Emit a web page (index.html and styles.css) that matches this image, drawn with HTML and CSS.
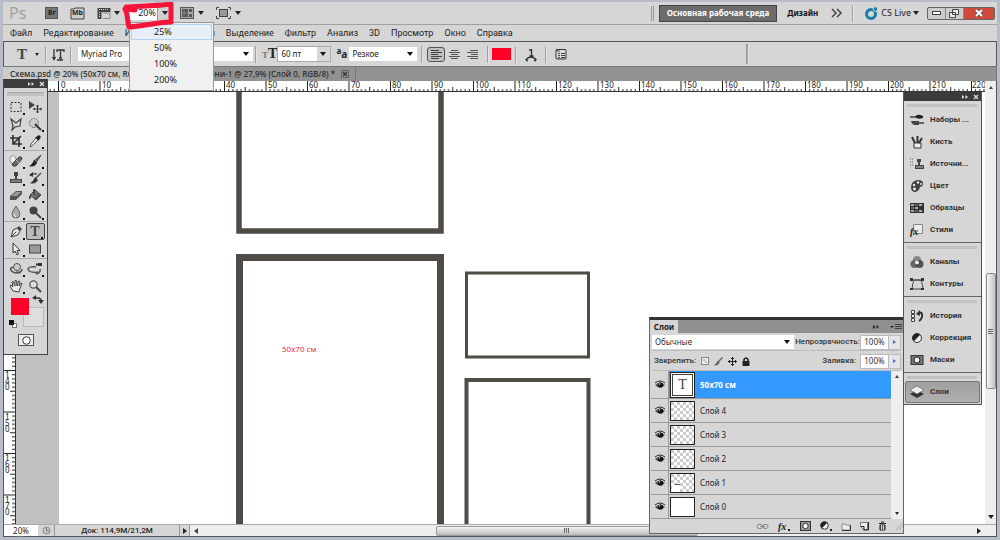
FILE: index.html
```html
<!DOCTYPE html>
<html lang="ru">
<head>
<meta charset="utf-8">
<title>Схема.psd</title>
<link rel="stylesheet" href="styles.css">
</head>
<body>
<svg class="defs" aria-hidden="true">
  <defs>
    <pattern id="checker" width="6" height="6" patternUnits="userSpaceOnUse"><rect width="6" height="6" fill="#fff"/><path d="M0 0h3v3H0zM3 3h3v3H3z" fill="#ccc"/></pattern>
    <pattern id="hticks" x="54" width="41.5" height="11" patternUnits="userSpaceOnUse">
      <path d="M.5 0v11M21.2 6v5M4.6 8v3M8.8 8v3M12.9 8v3M17 8v3M25.4 8v3M29.5 8v3M33.7 8v3M37.8 8v3" stroke="#222" fill="none"/>
    </pattern>
    <pattern id="vticks" y="29" x="0" width="11" height="41.5" patternUnits="userSpaceOnUse">
      <path d="M0 .5h11M6 21.2h5M8 4.6h3M8 8.8h3M8 12.9h3M8 17h3M8 25.4h3M8 29.5h3M8 33.7h3M8 37.8h3" stroke="#222" fill="none"/>
    </pattern>
    <linearGradient id="dark" x1="0" y1="0" x2="1" y2="1"><stop offset="0" stop-color="#aaa"/><stop offset="1" stop-color="#333"/></linearGradient>
    <symbol id="eye" viewBox="0 0 12 12"><path d="M1 6Q6 1 11 6Q6 11 1 6z" fill="#555"/><circle cx="6.500" cy="6" r="2.600" fill="#111"/><path d="M1 4Q6 0 11 4" stroke="#222" fill="none"/><circle cx="5.500" cy="5" r=".8" fill="#ddd"/></symbol>
    <symbol id="close" viewBox="0 0 8 8"><path d="M2 2l4 4M6 2L2 6" stroke="currentColor" stroke-width="1.400"/></symbol>
    <symbol id="chevs" viewBox="0 0 8 8"><path d="M1 2l2.500 2L1 6zM4.500 2L7 4 4.500 6z" fill="currentColor"/></symbol>
  </defs>
</svg>
<div class="app">
  <header class="appbar">
    <span class="logo">Ps</span>
    <button class="ico bridge" aria-label="Bridge"><svg width="13" height="12"><rect x=".5" y=".5" width="12" height="11" fill="#777" stroke="#555"/></svg><span class="mark">Br</span></button>
    <button class="ico mini" aria-label="Mini Bridge"><svg width="15" height="13"><path d="M1 2h3l1-1h9v11H1z" fill="#ccc" stroke="#444"/></svg><span class="mark">Mb</span></button>
    <button class="ico film" aria-label="Вид"><svg width="15" height="13"><path d="M.5 1h13v4h-9v7h-4z" fill="#444"/><path d="M2 2.500h10" stroke="#ddd" stroke-dasharray="1 1"/><path d="M2.500 5v6" stroke="#ddd" stroke-dasharray="1 1"/><path d="M6 6h7v5.500H6" fill="none" stroke="#888"/></svg><i class="tri"></i></button>
    <div class="zoom">
      <input type="text" value="20%" aria-label="Масштаб"><button class="drop" aria-label="Список масштабов"><i class="tri"></i></button>
      <ul class="zoommenu">
        <li class="on"><button>25%</button></li><li><button>50%</button></li><li><button>100%</button></li><li><button>200%</button></li>
      </ul>
      <svg class="scribble" width="56" height="32"><path d="M3 5C14 4 35 4 48 2L48 20C36 20 22 24 6 25C4 18 5 12 2 7L12 8" fill="none" stroke="#f4143a" stroke-width="5" stroke-linecap="round" stroke-linejoin="round"/></svg>
    </div>
    <button class="ico arrange" aria-label="Упорядочить"><svg width="14" height="12"><rect x=".5" y=".5" width="13" height="11" fill="#aaa" stroke="#555"/><path d="M2 2h6v8H2zM9 2h3v3H9zM9 7h3v3H9z" fill="#555"/><path d="M4 3v6M2 6h6" stroke="#888"/></svg><i class="tri"></i></button>
    <button class="ico" aria-label="Режим экрана"><svg width="15" height="12"><rect x="3.500" y="2.500" width="8" height="7" fill="#999" stroke="#444"/><path d="M.5 3V.5H3M12 .5h2.500V3M.5 9v2.500H3M12 11.500h2.500V9" stroke="#444" fill="none"/></svg><i class="tri"></i></button>
    <div class="right">
      <i class="grip2"></i>
      <button class="ws on">Основная рабочая среда</button>
      <button class="ws">Дизайн</button>
      <button class="more" aria-label="Ещё"><svg width="11" height="8"><path d="M1 0l4 4-4 4M6 0l4 4-4 4" fill="none" stroke="#444" stroke-width="1.500"/></svg></button>
      <i class="sep"></i>
      <button class="cslive"><svg width="15" height="15"><circle cx="7" cy="8" r="4.500" fill="none" stroke="#1b7da6" stroke-width="3"/><circle cx="11.500" cy="3" r="2.300" fill="#1b7da6" stroke="#d6d6d6"/></svg>CS Live<i class="tri"></i></button>
      <div class="winbtns">
        <button aria-label="Свернуть"><svg width="10" height="6"><rect x=".5" y="1.500" width="8" height="3" fill="#fff" stroke="#444"/></svg></button>
        <button aria-label="Восстановить"><svg width="11" height="9"><path d="M3.500.5h6v5h-6zM.5 3.500h6v5h-6z" fill="#eee" stroke="#444"/></svg></button>
        <button class="x" aria-label="Закрыть"><svg width="9" height="8"><path d="M1 1l6 6M7 1L1 7" stroke="#555" stroke-width="3.500"/><path d="M1 1l6 6M7 1L1 7" stroke="#fff" stroke-width="2"/></svg></button>
      </div>
    </div>
  </header>
  <nav class="menubar">
    <button>Файл</button><button>Редактирование</button><button>Изображение</button><button>Слои</button><button>Выделение</button><button>Фильтр</button><button>Анализ</button><button>3D</button><button>Просмотр</button><button>Окно</button><button>Справка</button>
  </nav>
  <div class="options">
    <button class="opt tool" aria-label="Текст"><span class="serif">T</span><i class="tri small"></i></button>
    <i class="sep"></i>
    <button class="opt orient" aria-label="Ориентация"><svg width="12" height="13"><path d="M2 1v10M.5 9L2 11.500 3.500 9M5 4V2h7v2M8.500 2v8M7 10h3M5 12h6" fill="none" stroke="#333" stroke-width="1.300"/></svg></button>
    <i class="sep"></i>
    <label class="sel family"><select aria-label="Гарнитура"><option>Myriad Pro</option></select></label>
    <i class="sep"></i>
    <span class="ticon" aria-hidden="true"><small>T</small>T</span>
    <label class="sel size boxed"><select aria-label="Кегль"><option>60 пт</option></select></label>
    <span class="aa" aria-hidden="true"><sup>a</sup>a</span>
    <label class="sel smooth"><select aria-label="Сглаживание"><option>Резкое</option></select></label>
    <i class="sep"></i>
    <div class="aligns">
      <button class="on" aria-label="По левому краю"><svg width="11" height="11"><path d="M0 1.500h8M0 3.500h11M0 5.500h7M0 7.500h11M0 9.500h8" stroke="#444"/></svg></button>
      <button aria-label="По центру"><svg width="11" height="11"><path d="M2 1.500h7M0 3.500h11M2 5.500h7M0 7.500h11M2 9.500h7" stroke="#555"/></svg></button>
      <button aria-label="По правому краю"><svg width="11" height="11"><path d="M3 1.500h8M0 3.500h11M4 5.500h7M0 7.500h11M3 9.500h8" stroke="#555"/></svg></button>
    </div>
    <i class="sep"></i>
    <button class="color" aria-label="Цвет текста"></button>
    <i class="sep"></i>
    <button class="opt warp" aria-label="Деформация"><svg width="12" height="13"><path d="M4 2h3M6.500 1v7M4.500 8h4M.5 12Q6 6 11.500 12M1 12.500h2M9 12.500h2" fill="none" stroke="#333" stroke-width="1.300"/></svg></button>
    <i class="sep"></i>
    <button class="opt panel" aria-label="Панель символов"><svg width="12" height="12"><rect x="1" y="1.500" width="10" height="9.500" rx="1" fill="#ddd" stroke="#333"/><path d="M2 1v2h3M3 5.500h2M6 5.500h4M3 7.500h2M6 7.500h4M3 9.500h2M6 9.500h4" stroke="#444" fill="none"/></svg></button>
    <i class="sep last"></i>
  </div>
  <div class="tabs">
    <button class="tab on">Схема.psd @ 20% (50x70 см, RGB/8) *<svg class="tx" width="8" height="8"><rect x=".5" y=".5" width="7" height="7" fill="none" stroke="#666"/><use href="#close"/></svg></button>
    <button class="tab second">Без имени-1 @ 27,9% (Слой 0, RGB/8) *<svg class="tx" width="8" height="8"><rect x=".5" y=".5" width="7" height="7" fill="none" stroke="#666"/><use href="#close"/></svg></button>
  </div>
  <main class="doc">
    <div class="hruler"><svg width="100%" height="11"><rect width="100%" height="11" fill="url(#hticks)"/>
      <g class="rl"><text x="57" y="7">0</text><text x="98" y="7">10</text><text x="140" y="7">20</text><text x="181" y="7">30</text><text x="222" y="7">40</text><text x="264" y="7">50</text><text x="305" y="7">60</text><text x="347" y="7">70</text><text x="388" y="7">80</text><text x="430" y="7">90</text><text x="471" y="7">100</text><text x="513" y="7">110</text><text x="554" y="7">120</text><text x="596" y="7">130</text><text x="637" y="7">140</text><text x="679" y="7">150</text><text x="720" y="7">160</text><text x="762" y="7">170</text><text x="803" y="7">180</text><text x="845" y="7">190</text><text x="886" y="7">200</text><text x="928" y="7">210</text><text x="968" y="7">220</text></g></svg></div>
    <div class="vruler"><svg width="11" height="100%"><rect width="11" height="100%" fill="url(#vticks)"/>
      <g class="rl"><text x="1" y="286">1</text><text x="1" y="292">4</text><text x="1" y="298">0</text><text x="1" y="328">1</text><text x="1" y="334">5</text><text x="1" y="340">0</text><text x="1" y="369">1</text><text x="1" y="375">6</text><text x="1" y="381">0</text><text x="1" y="411">1</text><text x="1" y="417">7</text><text x="1" y="423">0</text></g></svg></div>
    <div class="canvas">
      <svg class="art" width="100%" height="100%">
        <g fill="none" stroke="#4f4b45">
          <rect x="180" y="-40" width="202" height="179" stroke-width="5.500"/>
          <rect x="180.500" y="165.500" width="201" height="400" stroke-width="7"/>
          <rect x="407.500" y="181" width="122" height="84" stroke-width="3"/>
          <rect x="407.500" y="288" width="122" height="300" stroke-width="4"/>
        </g>
        <text x="223" y="260" class="arttext">50x70 см</text>
      </svg>
    </div>
    <div class="vscroll"><i class="tri up"></i><div class="thumb"></div><i class="tri"></i></div>
    <footer class="status">
      <input type="text" value="20%" aria-label="Масштаб документа"><span class="clock"><svg width="9" height="9"><circle cx="4.500" cy="4.500" r="3.500" fill="#ccc" stroke="#888"/><path d="M4.500 2v3H7" stroke="#777" fill="none"/></svg></span>
      <span class="size">Док: 114,9M/21,2M</span>
      <button class="play" aria-label="Сведения"><i class="tri rt"></i></button>
      <div class="hscroll"><i class="tri lf"></i><div class="thumb"></div><i class="tri rt"></i></div>
    </footer>
  </main>
  <svg class="orb" width="22" height="4" aria-hidden="true"><path d="M0 4Q11-3 22 4z" fill="#9fc3dc" stroke="#4c7696"/></svg>

  <aside class="tools" aria-label="Инструменты">
    <div class="head"><svg width="8" height="8"><use href="#chevs"/></svg><svg width="8" height="8"><use href="#close"/></svg></div>
    <i class="grip"></i>
    <div class="tg">
      <button class="m" aria-label="Область"><svg viewBox="0 0 14 14"><rect x="2" y="2.500" width="10" height="9" fill="none" stroke="#333" stroke-dasharray="2 1.500"/></svg></button>
      <button aria-label="Перемещение"><svg viewBox="0 0 14 14"><path d="M1 1v8l6-4z" fill="#444"/><path d="M9.500 5v8M5.500 9h8M8.500 6.500l1-1.500 1 1.500M8.500 11.500l1 1.500 1-1.500M7 8L5.500 9 7 10M12 8l1.500 1L12 10" stroke="#333" fill="none"/></svg></button>
      <button class="m" aria-label="Лассо"><svg viewBox="0 0 14 14"><path d="M2 2l5 4 5-4-1 7-5 1-3 3 1-4z" fill="none" stroke="#444" stroke-width="1.200"/></svg></button>
      <button class="m" aria-label="Быстрое выделение"><svg viewBox="0 0 14 14"><circle cx="6" cy="6" r="4.500" fill="#ccc" stroke="#555" stroke-dasharray="1.500 1"/><path d="M7 7l6 6" stroke="#333" stroke-width="2"/></svg></button>
      <button class="m" aria-label="Рамка"><svg viewBox="0 0 14 14"><path d="M4 1v9h9M1 4h9v9M4 10l8-8" fill="none" stroke="#333" stroke-width="1.700"/></svg></button>
      <button class="m" aria-label="Пипетка"><svg viewBox="0 0 14 14"><path d="M8 4l2 2-6 6-2 1 1-3z" fill="#eee" stroke="#555"/><path d="M8 3l3-2 2 2-2 3 0 1-4-4z" fill="#222"/></svg></button>
    </div>
    <div class="tg">
      <button class="m" aria-label="Восстанавливающая кисть"><svg viewBox="0 0 14 14"><ellipse cx="4" cy="5.500" rx="3" ry="4" fill="#eee" stroke="#999"/><path d="M3 10l7-7q3-1 3 2L7 12q-4 1-4-2z" fill="#666" stroke="#444"/><path d="M7 6l3 3" stroke="#bbb"/></svg></button>
      <button class="m" aria-label="Кисть"><svg viewBox="0 0 14 14"><path d="M13 1L6 7l2 2z" fill="#777" stroke="#444"/><path d="M6 6l3 3q-3 5-8 3 3-1 5-6z" fill="#222"/></svg></button>
      <button class="m" aria-label="Штамп"><svg viewBox="0 0 14 14"><path d="M5 1h4v4H8v3h5v4H1V8h5V5H5z" fill="#444"/><path d="M2 10h10" stroke="#bbb"/></svg></button>
      <button class="m" aria-label="Архивная кисть"><svg viewBox="0 0 14 14"><path d="M13 2L7 8M3 5q0-3 6-2" fill="none" stroke="#555" stroke-width="1.600"/><path d="M1 4l4-3v5zM7 6l3 3q-3 5-8 3 3-1 5-6z" fill="#333"/></svg></button>
      <button class="m" aria-label="Ластик"><svg viewBox="0 0 14 14"><path d="M1 8l6-5h6v3l-6 6H1z" fill="#555"/><path d="M2 8l5-4h5L8 8z" fill="#999"/></svg></button>
      <button class="m" aria-label="Заливка"><svg viewBox="0 0 14 14"><path d="M2 7l5-5 6 5-5 5z" fill="url(#dark)" stroke="#444"/><path d="M6 7V1M3 7q-2 2-1 4" stroke="#333" stroke-width="1.500" fill="none"/></svg></button>
      <button class="m" aria-label="Размытие"><svg viewBox="0 0 14 14"><path d="M7 1q4 6 4 8a4 4 0 0 1-8 0q0-2 4-8z" fill="#aaa" stroke="#666"/><path d="M5 9q0 2 2 3" stroke="#fff" fill="none"/></svg></button>
      <button class="m" aria-label="Осветлитель"><svg viewBox="0 0 14 14"><circle cx="5.500" cy="5.500" r="4" fill="#444"/><path d="M8 8l5 5" stroke="#444" stroke-width="1.800"/></svg></button>
    </div>
    <div class="tg">
      <button class="m" aria-label="Перо"><svg viewBox="0 0 14 14"><path d="M2 12l2-7 4-2 3 3-2 4z" fill="#ddd" stroke="#444"/><path d="M8 3l2-2 3 3-2 2z" fill="#444"/><path d="M2 12l5-5" stroke="#444"/></svg></button>
      <button class="m on" aria-label="Текст"><span class="serif">T</span></button>
      <button class="m" aria-label="Стрелка"><svg viewBox="0 0 14 14"><path d="M4 1v10l2-2 2 4 1.500-1L8 8.500h3z" fill="#eee" stroke="#333"/></svg></button>
      <button class="m" aria-label="Прямоугольник"><svg viewBox="0 0 14 14"><rect x="1.500" y="3" width="11" height="8" fill="#999" stroke="#444"/></svg></button>
    </div>
    <div class="tg">
      <button class="m" aria-label="3D-объект"><svg viewBox="0 0 14 14"><circle cx="8" cy="5" r="3.500" fill="#ccc" stroke="#555"/><path d="M4 5q-5 2 0 5 4 2 8 0M13 7q0 4-6 3" fill="none" stroke="#555" stroke-width="1.600"/></svg></button>
      <button class="m" aria-label="3D-камера"><svg viewBox="0 0 14 14"><path d="M8 5Q0 4 0 7.500q2 4 12 2.500M12 7q1 4-4 5" fill="none" stroke="#555" stroke-width="1.500"/><path d="M8 1l2 1V1h4v3h-4V3L8 4z" fill="#333"/></svg></button>
      <button class="m" aria-label="Рука"><svg viewBox="0 0 14 14"><path d="M4 12L1 7l1-1 2 2-1-5 1-.500L6 7V1.500h1.500L8 7l1.500-5h1L10 7l2-3 1 .500-2 5-1 3.500z" fill="#eee" stroke="#444"/></svg></button>
      <button aria-label="Лупа"><svg viewBox="0 0 14 14"><circle cx="5.500" cy="5.500" r="3.700" fill="#ddd" stroke="#555" stroke-width="1.300"/><path d="M8 8l5 5" stroke="#444" stroke-width="2"/></svg></button>
    </div>
    <div class="swatches">
      <svg width="34" height="34"><rect x="14.500" y="9.500" width="20" height="19" fill="#dedede" stroke="#bbb"/><path d="M2 0h18v17H2z" fill="#ff0026"/><path d="M26 0h3q3 0 3 3" fill="none" stroke="#333" stroke-width="1.500"/><path d="M23 0l4-3v5zM29 2h6l-3 4z" fill="#333"/><rect x="3.500" y="25.500" width="4" height="4" fill="#fff" stroke="#777"/><path d="M0 22h5v5H0z" fill="#111"/></svg>
    </div>
    <button class="qm" aria-label="Быстрая маска"><svg width="9" height="9"><circle cx="4.500" cy="4.500" r="3.800" fill="#fff" stroke="#333"/></svg></button>
  </aside>

  <aside class="dock" aria-label="Панели">
    <div class="head"><svg width="8" height="8"><use href="#chevs"/></svg><svg width="8" height="8"><use href="#close"/></svg></div>
    <div class="group">
      <button><svg viewBox="0 0 14 14"><path d="M0 4h6M8 10h6" stroke="#666" stroke-width="2"/><path d="M5 4q2-4 8-1v2q-5 2-8-1z" fill="#222"/><path d="M1 8h8v4H5q-3 0-4-4z" fill="#444"/></svg>Наборы ...</button>
      <button><svg viewBox="0 0 14 14"><path d="M4 8h7v5H4z" fill="#eee" stroke="#333"/><path d="M5 8L2 2M7.500 8V1M9 8l3-5" stroke="#333" stroke-width="2"/></svg>Кисть</button>
      <button><svg viewBox="0 0 14 14"><path d="M7 2h4v3h-1v3h4v4H5V8h3V5H7z" fill="#444"/><path d="M0 2h4M0 5h4M0 8h3" stroke="#666" stroke-dasharray="1 1"/><path d="M6 10h7" stroke="#bbb"/></svg>Источни...</button>
      <button><svg viewBox="0 0 14 14"><path d="M1 8Q1 2 8 1q6 0 5 5-1 2-3 2-1 5-6 5-3-1-3-5z" fill="#444"/><g fill="#eee"><circle cx="4" cy="6" r="1.200"/><circle cx="8" cy="3.500" r="1.200"/><circle cx="11" cy="5" r="1"/><circle cx="4.500" cy="10" r="1.400"/></g></svg>Цвет</button>
      <button><svg viewBox="0 0 14 14"><path d="M0 2h14v10H0z" fill="#333"/><path d="M1 3h3v2H1zM1 9h3v2H1zM5 6h3v2H5zM9 3h3v2H9zM9 9h3v2H9z" fill="#aaa"/><path d="M5 3h3v2H5zM1 6h3v2H1zM5 9h3v2H5z" fill="#666"/></svg>Образцы</button>
      <button><svg viewBox="0 0 14 14"><path d="M3.500 1.500h9v9h-9z" fill="#eee" stroke="#888"/><text x="0" y="12" class="fx">fx</text></svg>Стили</button>
    </div>
    <div class="group">
      <button><svg viewBox="0 0 14 14"><circle cx="7" cy="5" r="4" fill="#888"/><circle cx="4.500" cy="9" r="4" fill="#666"/><circle cx="9.500" cy="9" r="4" fill="#333" opacity=".8"/><circle cx="7" cy="7.500" r="2" fill="#eee"/></svg>Каналы</button>
      <button><svg viewBox="0 0 14 14"><path d="M2 12Q3 3 5 3h5q2 0 3 9zM1 3h12" fill="none" stroke="#444"/><path d="M0 1h3v3H0zM11 1h3v3h-3zM0 11h3v2H0zM11 11h3v2h-3z" fill="#333"/></svg>Контуры</button>
    </div>
    <div class="group">
      <button><svg viewBox="0 0 14 14"><path d="M1.500 1.500h3v3h-3zM1.500 5.500h3v3h-3zM1.500 9.500h3v3h-3z" fill="#eee" stroke="#444"/><path d="M8 4q5-2 4 4-1 3-3 4" fill="none" stroke="#333" stroke-width="2"/><path d="M6 5l4-4v6z" fill="#333"/></svg>История</button>
      <button><svg viewBox="0 0 14 14"><circle cx="7" cy="7" r="4.500" fill="#eee" stroke="#333"/><path d="M3.800 10.200a4.500 4.500 0 0 1 6.400-6.400z" fill="#222"/></svg>Коррекция</button>
      <button><svg viewBox="0 0 14 14"><rect x="1" y="2.500" width="12" height="9" fill="#777" stroke="#333"/><circle cx="7" cy="7" r="3" fill="#eee" stroke="#222"/></svg>Маски</button>
    </div>
    <div class="group">
      <button class="on"><svg viewBox="0 0 14 14"><path d="M0 9l7-4 7 4-7 4z" fill="#333"/><path d="M0 5l7-4 7 4-7 4z" fill="#eee" stroke="#666" stroke-width=".7"/></svg>Слои</button>
    </div>
  </aside>

  <section class="layers" aria-label="Слои">
    <div class="ltabs"><button class="ltab">Слои</button><span class="lt-r"><svg width="8" height="8"><use href="#chevs"/></svg><svg width="12" height="8"><path d="M0 3h4L2 5z" fill="#222"/><path d="M5 1.500h7M5 3.500h7M5 5.500h7" stroke="#444"/></svg></span></div>
    <div class="lrow">
      <label class="sel mode"><select aria-label="Режим наложения"><option>Обычные</option></select></label>
      <label for="op">Непрозрачность:</label><span class="num"><input id="op" type="text" value="100%"><button aria-label="Ползунок непрозрачности"><i class="tri rt"></i></button></span>
    </div>
    <div class="lrow lock">
      <span>Закрепить:</span>
      <button aria-label="Прозрачность"><svg width="8" height="8"><rect x=".5" y=".5" width="7" height="7" fill="#eee" stroke="#888"/><path d="M2 2h2v2H2zM4 4h2v2H4z" fill="#bbb"/></svg></button>
      <button aria-label="Пиксели"><svg width="9" height="9"><path d="M8.500.5L4 5" stroke="#666" stroke-width="1.500"/><path d="M4 4l1.500 1.500Q4 9 0 8.500 2 7 4 4z" fill="#555"/></svg></button>
      <button aria-label="Положение"><svg width="9" height="9"><path d="M4.500 0v9M0 4.500h9M3 2L4.500.5 6 2M3 7l1.500 1.500L6 7M2 3L.5 4.500 2 6M7 3l1.500 1.500L7 6" fill="none" stroke="#222"/></svg></button>
      <button aria-label="Всё"><svg width="8" height="9"><path d="M2 4V2.500Q4-.5 6 2.500V4" fill="none" stroke="#222" stroke-width="1.500"/><path d="M.5 4h7v5h-7z" fill="#222"/></svg></button>
      <label class="push" for="fl">Заливка:</label><span class="num"><input id="fl" type="text" value="100%"><button aria-label="Ползунок заливки"><i class="tri rt"></i></button></span>
    </div>
    <div class="lbody">
      <ul class="llist">
        <li class="on"><span class="eye"><svg width="12" height="12"><use href="#eye"/></svg></span><span class="th t"><span class="serif">T</span></span><span>50x70 см</span></li>
        <li><span class="eye"><svg width="12" height="12"><use href="#eye"/></svg></span><span class="th"><svg><rect width="100%" height="100%" fill="url(#checker)"/></svg></span><span>Слой 4</span></li>
        <li><span class="eye"><svg width="12" height="12"><use href="#eye"/></svg></span><span class="th"><svg><rect width="100%" height="100%" fill="url(#checker)"/></svg></span><span>Слой 3</span></li>
        <li><span class="eye"><svg width="12" height="12"><use href="#eye"/></svg></span><span class="th"><svg><rect width="100%" height="100%" fill="url(#checker)"/></svg></span><span>Слой 2</span></li>
        <li><span class="eye"><svg width="12" height="12"><use href="#eye"/></svg></span><span class="th"><svg><rect width="100%" height="100%" fill="url(#checker)"/><path d="M1 11h8v7H1z" fill="#fff"/><path d="M4 10.500h5" stroke="#555"/></svg></span><span>Слой 1</span></li>
        <li><span class="eye"><svg width="12" height="12"><use href="#eye"/></svg></span><span class="th"></span><span>Слой 0</span></li>
      </ul>
      <div class="lscroll"><i class="tri up"></i><i class="tri small"></i></div>
    </div>
    <div class="lfoot">
      <button aria-label="Связать"><svg width="13" height="9"><path d="M1 4.500q0-2 2-2h2q1 0 1.500 2Q6 6.500 5 6.500H3q-2 0-2-2zM7 4.500q0-2 2-2h1q2 0 2 2t-2 2H9q-2 0-2-2zM4 4.500h5" fill="none" stroke="#888"/></svg></button>
      <button aria-label="Стиль слоя"><svg width="13" height="11"><text x="0" y="9" class="fx">fx</text><path d="M10 8h2v2h-2z" fill="#222"/></svg></button>
      <button aria-label="Маска"><svg width="11" height="10"><rect x=".5" y=".5" width="10" height="9" fill="#999" stroke="#333"/><circle cx="5.500" cy="5" r="2.700" fill="#fff" stroke="#333"/></svg></button>
      <button aria-label="Корректирующий слой"><svg width="12" height="10"><circle cx="4.500" cy="4.500" r="3.800" fill="#eee" stroke="#333"/><path d="M1.800 7.200a3.800 3.800 0 0 1 5.400-5.400zM10 8h2v2h-2z" fill="#222"/></svg></button>
      <button aria-label="Группа"><svg width="10" height="9"><path d="M1 2h3l1 1h4v5H1z" fill="#eee" stroke="#888"/><path d="M1 8.500h8.500V3" fill="none" stroke="#333"/></svg></button>
      <button aria-label="Новый слой"><svg width="9" height="10"><path d="M.5 1.500h7v7h-4l-3-3z" fill="#eee" stroke="#777"/><path d="M3.500 9h5V1M1 5.500h3V9" fill="none" stroke="#222"/></svg></button>
      <button aria-label="Удалить"><svg width="9" height="10"><path d="M1 2.500h7M3 1h3M2 4h5v5H2z" fill="#666" stroke="#222"/><path d="M3.500 4v5M5.500 4v5" stroke="#ccc"/></svg></button>
      <svg width="7" height="8"><path d="M0 8l7-7M3 8l4-4" stroke="#aaa"/></svg>
    </div>
  </section>
</div>
</body>
</html>
```
FILE: styles.css
```css
* { box-sizing: border-box; }
body { margin: 0; font: 9px/12px "Noto Sans", "Open Sans", sans-serif; color: #222; }
button, input, select { font: inherit; color: inherit; margin: 0; padding: 0; border: 0; background: none; border-radius: 0; }
button { display: flex; align-items: center; white-space: nowrap; }
ul { list-style: none; margin: 0; padding: 0; }
svg { display: block; flex: none; overflow: visible; }
.defs { position: absolute; width: 0; height: 0; }
.serif { font-family: "Liberation Serif", serif; font-weight: bold; color: #444; }
.fx { font: italic bold 10px "Liberation Serif", serif; fill: #222; }
.tri { flex: none; width: 0; height: 0; border: 3px solid transparent; border-top: 4px solid #222; border-bottom: 0; }
.tri.small { border-width: 3px 2px 0; }
.tri.up { border: 2px solid transparent; border-bottom: 3px solid #444; border-top: 0; }
.tri.rt { border: 3px solid transparent; border-left: 4px solid #222; border-right: 0; }
.tri.lf { border: 3px solid transparent; border-right: 4px solid #444; border-left: 0; }

.app { position: relative; height: 100vh; display: flex; flex-direction: column; overflow: hidden; background: #d6d6d6; border: solid #b6bdc8; border-width: 2px 3px 3px; }
.orb { position: absolute; left: 6px; bottom: -3px; }

.appbar { display: flex; align-items: center; height: 23px; flex: none; padding-left: 6px; border-bottom: 1px solid #a0a0a0; }
.logo { font-size: 16px; line-height: 20px; color: #a2a2a2; width: 36px; }
.ico { position: relative; gap: 4px; margin-right: 12px; }
.mark { position: absolute; left: 3px; font-size: 7px; font-weight: bold; color: #222; }
.mini .mark { left: 2px; }
.film { gap: 2px; margin-right: 9px; }
.zoom { position: relative; display: flex; width: 42px; height: 14px; margin-right: 9px; background: #fff; }
.zoom input { width: 28px; flex: 1; min-width: 0; text-align: right; padding-right: 1px; }
.drop { width: 14px; justify-content: center; background: #d0d0d0; border-left: 1px solid #999; }
.zoommenu { position: absolute; z-index: 20; left: 0; top: 16px; width: 85px; padding: 1px 1px 2px; background: #f0f0f0; border: 1px solid #999; }
.zoommenu button { width: 100%; height: 16px; padding-left: 23px; }
.zoommenu .on { background: #e6eef7; box-shadow: inset 0 0 0 1px #b5d2ee; }
.scribble { position: absolute; z-index: 21; left: -6px; top: -4px; }
.right { display: flex; align-items: center; margin-left: auto; }
.grip2 { width: 3px; height: 15px; border: solid #999; border-width: 0 1px; margin-right: 5px; }
.ws { height: 17px; font-size: 8px; font-weight: bold; padding: 0 4px; margin-right: 6px; color: #111; }
.ws.on { padding: 0 7px; background: #6c6c6c; color: #fff; border: 1px solid #444; }
.more { margin: 0 10px 0 3px; }
.sep { flex: none; width: 1px; height: 17px; background: #a0a0a0; box-shadow: 1px 0 #e4e4e4; }
.cslive { margin-left: 11px; gap: 2px; }
.winbtns { display: flex; margin: 0 2px 0 8px; height: 13px; border: 1px solid #666; border-radius: 2px; background: #ccc; }
.winbtns button { justify-content: center; width: 18px; border-right: 1px solid #888; }
.winbtns .x { width: 30px; background: #cf4a3a; border: 0; }

.menubar { display: flex; align-items: center; gap: 11px; height: 16px; flex: none; padding-left: 7px; font-family: Roboto, sans-serif; }

.options { display: flex; align-items: center; height: 25px; flex: none; border: solid #555; border-width: 1px 1px 0; }
.tool { padding-left: 13px; gap: 8px; margin-right: 6px; }
.tool .serif { font-size: 15px; }
.orient { margin: 0 6px 0 6px; }
.sel { position: relative; display: block; height: 14px; background: #fff; }
.sel select { appearance: none; width: 100%; height: 14px; padding-left: 3px; font-size: 8px; line-height: 14px; outline: 0; }
.sel::after { content: ""; position: absolute; right: 4px; top: 5px; border: 3px solid transparent; border-top: 4px solid #111; border-bottom: 0; pointer-events: none; }
.boxed { border-right: 13px solid #d8d8d8; outline: 1px solid #aaa; }
.boxed::after { right: -9px; }
.family { width: 175px; margin: 0 2px 0 7px; }
.ticon { font: bold 14px/16px "Liberation Serif", serif; margin: 0 1px 0 6px; }
.ticon small { font-size: 9px; color: #777; }
.size.boxed { width: 52px; }
.aa { width: 12px; margin: 0 1px 0 6px; font-size: 10px; font-weight: bold; white-space: nowrap; }
.aa sup { font-size: 8px; line-height: 1px; }
.smooth { width: 68px; margin-right: 4px; }
.aligns { display: flex; margin: 0 6px 0 5px; }
.aligns button { width: 18px; height: 15px; justify-content: center; border-radius: 3px; }
.aligns .on { background: #c0c0c0; border: 1px solid #555; }
.color { width: 19px; height: 12px; margin: 0 4px; background: #ff0026; }
.warp { margin: 0 8px 0 9px; }
.panel { margin: 0 auto 0 9px; }
.last { width: 2px; height: 20px; margin-right: 248px; }

.tabs { display: flex; flex: none; height: 15px; background: #929292; border: 1px solid #777; border-width: 1px 1px 0 0; }
.tab { height: 14px; font-size: 8px; font-weight: 600; font-family: "Open Sans", sans-serif; color: #333; padding: 0 6px 0 7px; gap: 6px; }
.tab.on { background: #ccc; }
.second { border-right: 1px solid #777; }
.tx { width: 8px; height: 8px; }

.doc { flex: 1; min-height: 0; display: grid; grid-template: 11px 1fr 12px / 12px 1fr 11px; border: solid #555; border-width: 0 1px 1px; background: #fff; }
.hruler { grid-area: 1 / 1 / 2 / 3; overflow: hidden; border-bottom: 1px solid #333; }
.rl { font: 8px "Noto Sans", sans-serif; fill: #222; }
.vruler { grid-area: 2 / 1 / 3 / 2; overflow: hidden; border-right: 1px solid #333; }
.canvas { grid-area: 2 / 2 / 3 / 3; overflow: hidden; padding-left: 43px; background: #c0c0c0; }
.art { background: #fff; overflow: hidden; }
.arttext { font: 8px "Open Sans", sans-serif; fill: #f4143a; }
.vscroll { grid-area: 1 / 3 / 3 / 4; display: flex; flex-direction: column; align-items: center; justify-content: space-between; padding: 5px 0; background: #eee; }
.vscroll .thumb { width: 10px; height: 116px; background: linear-gradient(90deg, #f4f4f4, #c4c4c4); border: 1px solid #888; border-radius: 2px; margin-top: 58px; display: grid; place-items: center; }
.vscroll .thumb::after { content: ""; width: 5px; height: 5px; background: repeating-linear-gradient(#666 0 1px, #ddd 1px 2px); }
.status { grid-area: 3 / 1 / 4 / 4; display: flex; align-items: stretch; font-size: 8px; background: #d6d6d6; border-top: 1px solid #aaa; }
.status input { width: 34px; background: #fff; text-align: center; }
.clock { width: 17px; display: grid; place-items: center; border-right: 1px solid #999; }
.size { line-height: 11px; }
.status .size { width: 125px; text-align: center; border-right: 1px solid #999; font-family: Roboto, sans-serif; font-weight: 500; }
.play { width: 10px; justify-content: center; border-right: 1px solid #999; }
.hscroll { flex: 1; display: flex; align-items: center; justify-content: space-between; padding: 0 15px 0 4px; background: #eee; }
.hscroll .thumb { width: 262px; height: 10px; margin-right: 42px; background: linear-gradient(#f4f4f4, #bbb); border: 1px solid #999; border-radius: 2px; display: grid; place-items: center; }
.hscroll .thumb::after { content: ""; width: 5px; height: 5px; background: repeating-linear-gradient(90deg, #666 0 1px, #ddd 1px 2px); }

.head { display: flex; justify-content: flex-end; align-items: center; gap: 3px; height: 9px; padding-right: 1px; background: #3c3c3c; color: #ddd; }
.tools { position: absolute; left: 0; top: 77px; width: 45px; padding-bottom: 6px; background: #d6d6d6; border: 1px solid #444; border-width: 0 1px 1px; }
.grip { display: block; height: 4px; margin: 4px 3px 1px; background: #c2c2c2; border-top: 1px solid #aaa; }
.tg { display: grid; grid-template-columns: 19px 19px; grid-auto-rows: 17px; justify-content: center; padding: 1px 0; border-bottom: 1px solid #aaa; }
.tg button { position: relative; justify-content: center; border-radius: 2px; }
.tg svg { width: 14px; height: 14px; }
.tg .serif { font-size: 14px; }
.tg .on { background: #bbb; border: 1px solid #444; }
.m::after { content: ""; position: absolute; right: 1px; bottom: 0; border: 1px solid #111; }
.tg:nth-of-type(5) { border: 0; }
.swatches { padding: 3px 0 0 5px; }
.qm { width: 16px; height: 12px; margin: 2px auto 2px 14px; justify-content: center; background: #eee; border: 1px solid #555; }

.dock { position: absolute; z-index: 2; right: 15px; top: 90px; width: 79px; background: #d6d6d6; border: 1px solid #555; border-top: 0; }
.group { padding: 8px 1px 1px; border-bottom: 1px solid #666; background: linear-gradient(#c2c2c2, #c2c2c2) 3px 3px / 70px 3px no-repeat; }
.group:last-child { border-bottom: 0; }
.group button { width: 100%; height: 22px; padding-left: 5px; gap: 6px; font: bold 8px/12px Roboto, sans-serif; color: #333; }
.group svg { width: 14px; height: 14px; }
.group .on { background: linear-gradient(#a0a0a0, #b0b0b0); border: 1px solid #777; border-radius: 2px; padding-left: 4px; }

.layers { position: absolute; right: 93px; bottom: 3px; width: 255px; font-size: 8px; background: #d6d6d6; border: 1px solid #666; border-top: 3px solid #333; }
.ltabs { display: flex; justify-content: space-between; height: 13px; background: #909090; }
.ltab { width: 28px; justify-content: center; font-weight: bold; background: #d6d6d6; }
.lt-r { display: flex; align-items: center; gap: 10px; padding-right: 1px; }
.lrow { display: flex; align-items: center; justify-content: space-between; height: 18px; margin: 0 3px 0 2px; padding-top: 1px; border-bottom: 1px solid #bbb; white-space: nowrap; font-family: Roboto, sans-serif; font-weight: 500; color: #333; }
.mode { width: 142px; font-family: "Noto Sans", sans-serif; font-weight: normal; }
.num { display: flex; width: 39px; height: 13px; background: #fff; outline: 1px solid #bbb; font-family: "Noto Sans", sans-serif; font-weight: normal; }
.num input { width: 27px; text-align: center; }
.num button { width: 12px; justify-content: center; background: #e4e4ea; border-left: 1px solid #bbb; }
.num .tri { border-width: 2px 0 2px 3px; border-left-color: #56b; }
.lock { justify-content: flex-start; gap: 5px; padding-left: 2px; height: 20px; }
.push { margin-left: auto; }
.lbody { display: flex; }
.llist { flex: 1; margin-left: 1px; }
.llist li { display: flex; align-items: center; height: 24px; border-bottom: 1px solid #999; }
.llist li > span:last-child { padding-left: 5px; }
.llist .on { height: 28px; background: linear-gradient(90deg, #d6d6d6 17px, #3399ff 17px); color: #fff; font-weight: bold; }
.eye { width: 18px; height: 100%; display: grid; place-items: center; border-right: 1px solid #999; }
.th { width: 25px; height: 20px; margin-left: 1px; display: grid; place-items: center; background: #fff; border: 1px solid #222; overflow: hidden; }
.th svg { width: 100%; height: 100%; }
.th.t { height: 26px; box-shadow: inset 0 0 0 1px #fff, inset 0 0 0 2px #444; }
.th .serif { font-size: 14px; font-weight: normal; }
.lscroll { width: 12px; display: flex; flex-direction: column; justify-content: space-between; align-items: center; padding: 4px 0; background: #eee; }
.lfoot { display: flex; align-items: center; justify-content: flex-end; gap: 9px; height: 14px; }
```
